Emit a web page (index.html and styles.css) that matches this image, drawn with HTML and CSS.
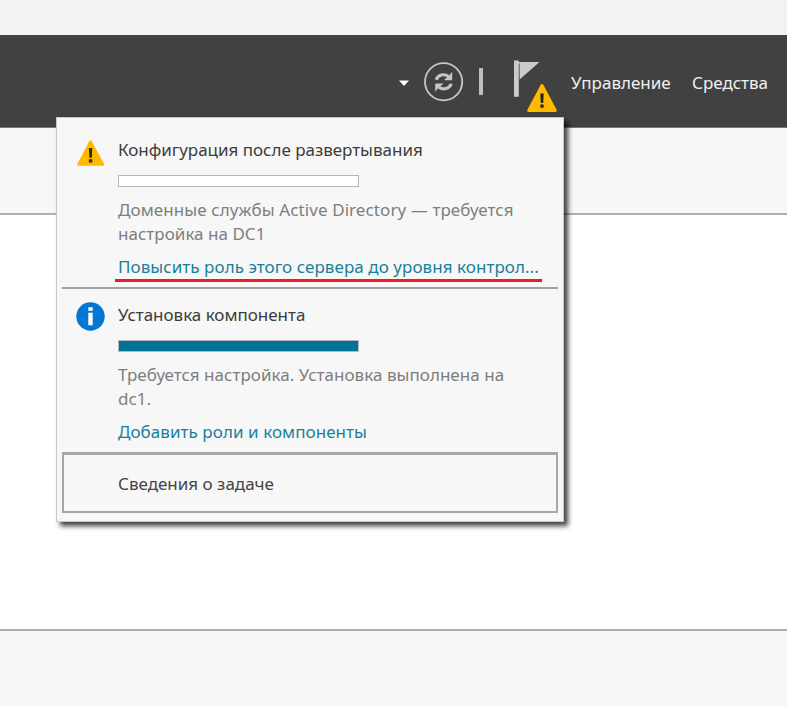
FILE: index.html
```
<!DOCTYPE html>
<html lang="ru">
<head>
<meta charset="utf-8">
<title>Диспетчер серверов</title>
<link rel="stylesheet" href="styles.css">
</head>
<body>
<div class="window">
  <div class="titlebar"></div>
  <header class="header">
    <svg class="caret" width="12" height="8" viewBox="0 0 12 8"><path d="M1 1.5h10L6 7z" fill="#fff"/></svg>
    <svg class="refresh" width="40" height="40" viewBox="0 0 40 40" fill="none" stroke="#c6c6c6">
      <circle cx="19.6" cy="19.7" r="18.6" stroke-width="1.8"/>
      <path d="M12.2 17.8C14 12.6 20.2 11.4 24.4 14.4M27.2 21.7C25.4 27 19.2 28.2 15 25.2" stroke-width="3.2"/>
      <path d="M28.2 9.8V18.2H19.8l3-2.8 2.6-2.2zM11.2 29.8V21.4H19.6l-3 2.8-2.6 2.2z" fill="#c6c6c6" stroke="none"/>
    </svg>
    <span class="separator"></span>
    <div class="flag">
      <svg width="28" height="38" viewBox="0 0 28 38" fill="#cacaca"><path d="M1 .5h4.8v36.3H1zM5.8 2H26.5L6.6 19.5V3.5h-.8z"/></svg>
      <svg class="flag-badge" width="32" height="30" viewBox="0 0 32 30"><path d="M16 2.5 29.3 27.5H2.7z" fill="#ffb900" stroke="#ffb900" stroke-width="3" stroke-linejoin="round"/><path d="M14.3 10.5h3.4l-.5 9.5h-2.4zM14.4 21.5h3.2v3.3h-3.2z" fill="#222"/></svg>
    </div>
    <nav class="nav"><span class="nav-manage">Управление</span><span class="nav-tools">Средства</span></nav>
  </header>
  <div class="subbar"></div>
  <main class="content"></main>
  <footer class="footer"></footer>
</div>
<section class="popup">
  <article class="task task-first">
    <svg class="icon" width="30" height="28" viewBox="0 0 30 28"><path d="M14.5 2.5 27 25.5H2.5z" fill="#ffb900" stroke="#ffb900" stroke-width="2.6" stroke-linejoin="round"/><path d="M12.9 9h3.4l-.5 9.7h-2.4zM12.9 20.2h3.4v3.3h-3.4z" fill="#332b12"/></svg>
    <div class="body">
      <h2>Конфигурация после развертывания</h2>
      <div class="progress"></div>
      <p><span class="service">Доменные службы Active Directory — требуется</span><br>настройка на DC1</p>
      <a class="marked">Повысить роль этого сервера до уровня контрол...</a>
    </div>
  </article>
  <article class="task task-second">
    <svg class="icon" width="30" height="30" viewBox="0 0 30 30"><circle cx="14.5" cy="14.5" r="14.2" fill="#0078d4"/><path d="M12.3 5.2h4.4v3.6h-4.4zM12.3 10.8h4.4v12.4h-4.4z" fill="#fff"/></svg>
    <div class="body">
      <h2>Установка компонента</h2>
      <div class="progress progress-full"></div>
      <p>Требуется настройка. Установка выполнена на<br>dc1.</p>
      <a>Добавить роли и компоненты</a>
    </div>
  </article>
  <div class="details">Сведения о задаче</div>
</section>
</body>
</html>
```
FILE: styles.css
```
* { box-sizing: border-box; }
body {
  margin: 0;
  position: relative;
  width: 787px;
  height: 706px;
  overflow: hidden;
  background: #fff;
  font: 17px/24px "Noto Sans", "Open Sans", sans-serif;
}
.window { display: flex; flex-direction: column; height: 706px; }
.titlebar { height: 35px; background: #f2f2f2; }
.header {
  display: flex;
  align-items: flex-start;
  height: 93px;
  padding-left: 398px;
  background: #414141;
  border-bottom: 1px solid #777;
}
.caret { margin-top: 44px; }
.refresh { margin: 27px 0 0 14px; }
.separator { width: 4px; height: 27px; margin: 33px 0 0 15px; background: #bebebe; }
.flag { position: relative; width: 28px; height: 38px; margin: 25px 0 0 30px; }
.flag-badge { position: absolute; left: 13px; top: 23px; }
.nav { display: flex; margin: 36px 0 0 30px; color: #f0f0f0; white-space: nowrap; }
.nav-manage { width: 121px; }
.subbar { height: 87px; background: #f7f7f7; border-bottom: 2px solid #b0b0b0; }
.content { height: 414px; }
.footer { flex: 1; background: #f7f7f7; border-top: 2px solid #b0b0b0; }
.popup {
  position: absolute;
  left: 56px;
  top: 117px;
  width: 508px;
  height: 405px;
  padding: 0 5px;
  background: #f7f7f7;
  border: 1px solid #c8c8c8;
  box-shadow: 4px 4px 5px rgba(0, 0, 0, .75);
  white-space: nowrap;
}
.task { display: flex; height: 171px; padding-left: 14px; }
.task-first { border-bottom: 2px solid #a0a0a0; }
.task-second { height: 163px; }
.icon { flex: none; margin-top: 21px; }
.task-second .icon { margin-top: 13px; }
.body { margin-left: 12px; padding-top: 20px; }
.task-second .body { padding-top: 14px; }
h2 { margin: 0; height: 24px; font: inherit; letter-spacing: -.02px; color: #3c3c3c; }
.progress { width: 241px; height: 12px; margin: 13px 0 11px; background: #fff; border: 1px solid #b8b8b8; }
.progress-full { background: #007396; }
p { margin: 0 0 9px; letter-spacing: .03px; color: #7e7e7e; }
.service { letter-spacing: .09px; }
a { display: block; letter-spacing: .06px; color: #19809c; }
.marked { position: relative; }
.marked::after { content: ""; position: absolute; left: -3px; top: 24px; width: 427px; height: 3px; background: #ed1c24; }
.details { width: 496px; height: 61px; padding: 17px 0 0 54px; border: 1px solid #a7a7a7; border-width: 3px 2px 2px; color: #444; }
```
